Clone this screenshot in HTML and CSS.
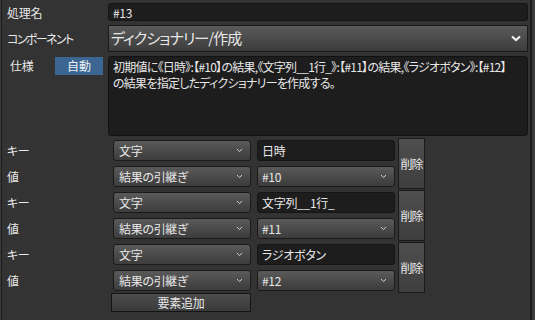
FILE: index.html
```html
<!DOCTYPE html>
<html lang="ja">
<head>
  <meta charset="UTF-8" />
  <title>処理の編集</title>
  <link rel="stylesheet" href="styles.css">
</head>
<body>
  <div class="panel">
    <div class="head">
      <div class="label">処理名</div>
      <div class="field text-input">#13</div>

      <div class="label tight">コンポーネント</div>
      <div class="field select big">
        <span>ディクショナリー/作成</span>
        <svg class="chev-big" width="10" height="7" viewBox="0 0 10 7"><path d="M1 1.5 L5 5 L9 1.5" fill="none" stroke="#f0f0f0" stroke-width="2.2"/></svg>
      </div>

      <div class="label spec">
        <span>仕様</span>
        <span class="badge">自動</span>
      </div>
      <div class="field memo">初期値に《日時》:【#10】の結果,《文字列__1行_》:【#11】の結果,《ラジオボタン》:【#12】<br>の結果を指定したディクショナリーを作成する。</div>
    </div>

    <div class="pair">
      <div class="label">キー</div>
      <div class="select small"><span>文字</span><svg width="7" height="5" viewBox="0 0 7 5"><path d="M1 1 L3.5 3.6 L6 1" fill="none" stroke="#cfcfcf" stroke-width="1"/></svg></div>
      <div class="text-input cell">日時</div>
      <div class="del">削除</div>
      <div class="label">値</div>
      <div class="select small"><span>結果の引継ぎ</span><svg width="7" height="5" viewBox="0 0 7 5"><path d="M1 1 L3.5 3.6 L6 1" fill="none" stroke="#cfcfcf" stroke-width="1"/></svg></div>
      <div class="select small cell"><span>#10</span><svg width="7" height="5" viewBox="0 0 7 5"><path d="M1 1 L3.5 3.6 L6 1" fill="none" stroke="#cfcfcf" stroke-width="1"/></svg></div>
    </div>

    <div class="pair">
      <div class="label">キー</div>
      <div class="select small"><span>文字</span><svg width="7" height="5" viewBox="0 0 7 5"><path d="M1 1 L3.5 3.6 L6 1" fill="none" stroke="#cfcfcf" stroke-width="1"/></svg></div>
      <div class="text-input cell">文字列__1行_</div>
      <div class="del">削除</div>
      <div class="label">値</div>
      <div class="select small"><span>結果の引継ぎ</span><svg width="7" height="5" viewBox="0 0 7 5"><path d="M1 1 L3.5 3.6 L6 1" fill="none" stroke="#cfcfcf" stroke-width="1"/></svg></div>
      <div class="select small cell"><span>#11</span><svg width="7" height="5" viewBox="0 0 7 5"><path d="M1 1 L3.5 3.6 L6 1" fill="none" stroke="#cfcfcf" stroke-width="1"/></svg></div>
    </div>

    <div class="pair">
      <div class="label">キー</div>
      <div class="select small"><span>文字</span><svg width="7" height="5" viewBox="0 0 7 5"><path d="M1 1 L3.5 3.6 L6 1" fill="none" stroke="#cfcfcf" stroke-width="1"/></svg></div>
      <div class="text-input cell">ラジオボタン</div>
      <div class="del">削除</div>
      <div class="label">値</div>
      <div class="select small"><span>結果の引継ぎ</span><svg width="7" height="5" viewBox="0 0 7 5"><path d="M1 1 L3.5 3.6 L6 1" fill="none" stroke="#cfcfcf" stroke-width="1"/></svg></div>
      <div class="select small cell"><span>#12</span><svg width="7" height="5" viewBox="0 0 7 5"><path d="M1 1 L3.5 3.6 L6 1" fill="none" stroke="#cfcfcf" stroke-width="1"/></svg></div>
    </div>

    <div class="add">要素追加</div>
  </div>
</body>
</html>
```

FILE: styles.css
```css
html, body {
  margin: 0;
  padding: 0;
  background: #3a3a3a;
  color: #e8e8e8;
  font-family: "Noto Sans CJK JP", "Noto Sans", sans-serif;
  font-size: 12px;
  font-feature-settings: "palt";
  letter-spacing: -0.3px;
}

body {
  padding-left: 1px;
  height: 320px;
  overflow: hidden;
}

.panel {
  width: 531px;
  height: 320px;
  box-sizing: border-box;
  background: #333333;
  border-left: 1px solid #1c1c1c;
  border-right: 2px solid #1c1c1c;
}

.head {
  display: grid;
  grid-template-columns: 106px 420px;
  grid-template-rows: 18px 27px 80px;
  row-gap: 4px;
  padding-top: 3px;
}

.label {
  display: flex;
  align-items: center;
  padding-left: 5px;
  white-space: nowrap;
}

.label.tight {
  letter-spacing: -1.6px;
}

.label.spec {
  align-items: flex-start;
  padding-top: 1px;
  padding-left: 8px;
}

.label.spec span:first-child {
  line-height: 18px;
  width: 45px;
}

.badge {
  display: inline-block;
  width: 48px;
  height: 18px;
  line-height: 18px;
  text-align: center;
  background: #3b6691;
  color: #eef2f6;
  letter-spacing: 0;
}

.field {
  box-sizing: border-box;
}

.text-input {
  box-sizing: border-box;
  background: #1d1d1d;
  border: 1px solid #151515;
  border-radius: 3px;
  padding: 0 4px;
  display: flex;
  align-items: center;
  white-space: nowrap;
}

.select {
  box-sizing: border-box;
  background: linear-gradient(#5a5a5a, #3c3c3c);
  border: 1px solid #1a1a1a;
  border-radius: 3px;
  display: flex;
  align-items: center;
  justify-content: space-between;
  white-space: nowrap;
}

.select.big {
  font-size: 15px;
  letter-spacing: -0.9px;
  padding: 0 6px 0 2px;
  border-radius: 1px;
}

.select.big span {
  transform: translateY(-1px);
}

.memo {
  background: #1d1d1d;
  border: 1px solid #121212;
  border-radius: 3px;
  padding: 2px 4px;
  line-height: 16px;
  white-space: nowrap;
  overflow: hidden;
  letter-spacing: -0.75px;
}

.pair {
  display: grid;
  grid-template-columns: 111px 144px 141px 27px;
  grid-template-rows: 26px 26px;
  margin-top: 2px;
}

.pair + .pair {
  margin-top: 0;
}

.pair .label {
  height: 21px;
  margin-top: 2px;
}

.select.small,
.pair .text-input {
  width: 138px;
  height: 21px;
  margin-top: 2px;
}

.select.small {
  padding: 0 7px 0 5px;
}

.select.small svg {
  margin-top: -1px;
}

.pair .cell {
  padding-left: 4px;
}

.del {
  grid-column: 4;
  grid-row: 1 / span 2;
  height: 51px;
  box-sizing: border-box;
  background: linear-gradient(#4e4e4e, #3e3e3e);
  border: 1px solid #1a1a1a;
  display: flex;
  align-items: center;
  justify-content: center;
  letter-spacing: -1px;
}

.add {
  width: 140px;
  height: 19px;
  box-sizing: border-box;
  margin-left: 109px;
  margin-top: -1px;
  background: linear-gradient(#4c4c4c, #3a3a3a);
  border: 1px solid #151515;
  text-align: center;
  line-height: 17px;
}
```
